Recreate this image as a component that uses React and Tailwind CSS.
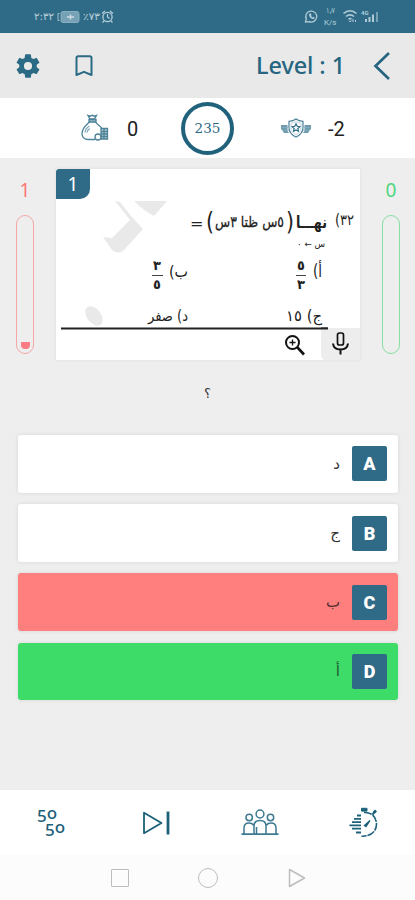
const TEAL = '#2b6a85';

const StatusLeft = () => (
  <svg width="82" height="18" viewBox="0 0 82 18" fill="none" className="opacity-75">
    <g fill="#e3f1f6" fontFamily="'DejaVu Sans', sans-serif" fontSize="10">
      <text x="0" y="12" textLength="20" lengthAdjust="spacingAndGlyphs">٢:٣٢</text>
      <text x="49" y="12" textLength="17" lengthAdjust="spacingAndGlyphs">٪٧٣</text>
    </g>
    <path d="M25.5 5.500h-1.500v7h1.500" stroke="#c9dfe8" />
    <rect x="27" y="3.500" width="18" height="11" rx="2" fill="#8fb5c5" stroke="#a5c5d2" />
    <path d="M33 9h7M36.500 6.500v5" stroke="#fff" strokeWidth="1.500" />
    <circle cx="73.500" cy="9" r="4.600" stroke="#e3f1f6" strokeWidth="1.300" />
    <path d="M73.500 6v3l2 1.500M68 5.500l3-2.500M79 5.500l-3-2.500M70 13l-1.500 1.500M77 13l1.500 1.500" stroke="#e3f1f6" strokeWidth="1.200" />
  </svg>
);

const StatusRight = () => (
  <svg width="78" height="24" viewBox="0 -2 78 24" fill="none" className="opacity-75">
    <path d="M1.500 15l.8-3A5.500 5.500 0 1 1 5 14.600z" stroke="#dcecf2" strokeWidth="1.300" />
    <path d="M5 7c0 3 2 5 5 5l.8-1.300-1.600-.9-.8.700L7 8.700l.6-.8-.8-1.600z" fill="#dcecf2" />
    <g fill="#dcecf2" fontFamily="'DejaVu Sans', sans-serif">
      <text x="22" y="6" fontSize="8" textLength="9" lengthAdjust="spacingAndGlyphs">١٫٧</text>
      <text x="20" y="18" fontFamily="Roboto, sans-serif" fontSize="8">K/s</text>
      <text x="57" y="8" fontFamily="Roboto, sans-serif" fontSize="6" fontWeight="700">4G</text>
    </g>
    <path d="M39.500 6.500c4-3.500 9-3.500 13 0M42 9.500c2.500-2 5.500-2 8 0M44.500 12.200c1-.8 2-.8 3 0" stroke="#dcecf2" strokeWidth="1.600" />
    <path d="M45 13.500l1.200 1.500 1.200-1.500M49 12v3M51.500 13v2" stroke="#dcecf2" />
    <path d="M62 15v-3M65.500 15V10M69 15V7.500" stroke="#dcecf2" strokeWidth="2" />
    <path d="M73 15V5" stroke="#8fb5c5" strokeWidth="2" />
  </svg>
);

const Gear = () => (
  <svg width="28" height="28" viewBox="0 0 24 24" fill={TEAL}>
    <path d="M19.430 12.980c.04-.32.07-.64.07-.98s-.03-.66-.07-.98l2.110-1.650c.19-.15.24-.42.12-.64l-2-3.460c-.12-.22-.39-.3-.61-.22l-2.490 1c-.52-.4-1.080-.73-1.690-.98l-.38-2.650A.488.488 0 0 0 14 2h-4c-.25 0-.46.18-.49.42l-.38 2.650c-.61.25-1.170.59-1.690.98l-2.490-1c-.23-.09-.49 0-.61.22l-2 3.460c-.13.22-.07.49.12.64l2.110 1.650c-.04.32-.07.65-.07.98s.03.66.07.98l-2.110 1.650c-.19.15-.24.42-.12.64l2 3.460c.12.22.39.3.61.22l2.490-1c.52.4 1.080.73 1.690.98l.38 2.650c.03.24.24.42.49.42h4c.25 0 .46-.18.49-.42l.38-2.650c.61-.25 1.170-.59 1.690-.98l2.490 1c.23.09.49 0 .61-.22l2-3.460c.12-.22.07-.49-.12-.64zM12 15.500a3.500 3.500 0 1 1 0-7 3.500 3.500 0 0 1 0 7z" />
  </svg>
);

const Bookmark = () => (
  <svg width="18" height="22" viewBox="0 0 18 22" fill="none" stroke={TEAL} strokeWidth="2">
    <path d="M1.500 20V3q0-1.800 1.800-1.800h11.400q1.800 0 1.800 1.800v17L9 16.800z" strokeLinejoin="round" />
  </svg>
);

const MoneyBag = () => (
  <svg width="28" height="28" viewBox="0 0 28 28" fill="none" stroke="#4d8298" strokeWidth="1.300">
    <path d="M7 1.500l2 3.500h4.500L15.500 1.500l-2 .7-2.200-.9-2.300.9z" />
    <path d="M8 5.500h7v2.500h-7z" fill="#9dbcc8" />
    <path d="M8.500 8C5 11.500 1 14 1 19.500 1 24 4 25.500 7.500 25.500H14M14.500 8c2 3 5 4 6.500 6.500" />
    <path d="M4 18.500c.2-3 2-5 4.500-6.500M6 18.500c.3-2 1.300-3 2.600-4" stroke="#80a7b7" />
    <path d="M20 14.500h6.500V25H20zM20 17.500h6.500M20 20h6.500M20 22.500h6.500M23 14.500V25" fill="#b9d0da" />
    <circle cx="17" cy="23" r="3" fill="#fff" />
  </svg>
);

const ShieldBadge = () => (
  <svg width="30" height="20" viewBox="0 0 30 20" fill="none" stroke="#4d8298" strokeWidth="1.200">
    <path d="M0 7h6.500v6L8 15H3l-1.500-2.500L0 11zM30 7h-6.500v6L22 15h5l1.500-2.500L30 11z" fill="#6e9bae" stroke="none" />
    <path d="M1 9.500h6M2 12h6M29 9.500h-6M28 12h-6" stroke="#8db2c1" strokeWidth=".7" />
    <path d="M15 1c2 1.700 4 2.300 7 2.300v6.200c0 4.500-2.500 7.500-7 9.500-4.500-2-7-5-7-9.500V3.300c3 0 5-.6 7-2.300z" fill="#fff" />
    <path d="M15 3.500c1.500 1 3 1.600 5 1.700v4.500c0 3-1.600 5.300-5 7-3.400-1.700-5-4-5-7V5.200c2-.1 3.500-.7 5-1.700z" stroke="#b3cbd5" strokeWidth=".8" />
    <path d="M15 5.800l1.200 2.500 2.600.3-1.900 1.900.5 2.700-2.400-1.300-2.400 1.300.5-2.700-1.900-1.900 2.600-.3z" stroke={TEAL} />
  </svg>
);

// Scanned exam question shown inside the card.
const QuestionScan = () => (
  <svg width="304" height="191" viewBox="56 169 304 191" className="block">
    <g fill="#e9e9e9">
      <path d="M115 201l5 1 11 14 12 13-19 21q-6 5-12 0l-9-13 9 1 18-18z" />
      <path d="M134 201h33l-13 15q-10-5-20-15z" />
      <ellipse cx="94" cy="316" rx="7" ry="11" transform="rotate(-38 94 316)" />
    </g>
    <g fill="#222" fontFamily="'DejaVu Sans', sans-serif" direction="rtl">
      <text x="354" y="225" fontSize="15" textLength="19" lengthAdjust="spacingAndGlyphs">٣٢)</text>
      <text x="327" y="228" fontSize="17" fontWeight="700" textLength="31" lengthAdjust="spacingAndGlyphs">نهـــا</text>
      <text x="284" y="227" fontSize="15" textLength="69" lengthAdjust="spacingAndGlyphs" stroke="#222" strokeWidth=".3">٥س ظتا ٣س</text>
      <text x="325" y="247" fontSize="9" textLength="28" lengthAdjust="spacingAndGlyphs">س ← ٠</text>
      <text x="322" y="277" fontSize="17" textLength="9" lengthAdjust="spacingAndGlyphs">أ)</text>
      <text x="305" y="270" fontSize="13" fontWeight="700">٥</text>
      <text x="305" y="289" fontSize="13" fontWeight="700">٣</text>
      <text x="188" y="277" fontSize="16" textLength="19" lengthAdjust="spacingAndGlyphs">ب)</text>
      <text x="161" y="270" fontSize="13" fontWeight="700">٣</text>
      <text x="161" y="289" fontSize="13" fontWeight="700">٥</text>
      <text x="322" y="321" fontSize="15" textLength="36" lengthAdjust="spacingAndGlyphs">ج) ١٥</text>
      <text x="188" y="321" fontSize="15" textLength="40" lengthAdjust="spacingAndGlyphs">د) صفر</text>
    </g>
    <g fill="#222" fontFamily="'DejaVu Sans', sans-serif">
      <text x="190" y="229" fontSize="16">=</text>
      <text x="206" y="230" fontSize="25" textLength="8" lengthAdjust="spacingAndGlyphs">(</text>
      <text x="286" y="230" fontSize="25" textLength="8" lengthAdjust="spacingAndGlyphs">)</text>
    </g>
    <path d="M296 275.500h10M152 275.500h11" stroke="#444" />
    <path d="M61 328.500h267" stroke="#222" strokeWidth="2" />
    <path d="M321 328h39v32h-34q-5 0-5-5z" fill="#ededed" />
    <path d="M321 328.500h7" stroke="#222" strokeWidth="2" />
    <g fill="none" stroke="#111" strokeWidth="2">
      <circle cx="292.500" cy="342.500" r="6.500" />
      <path d="M297 347l7 7.500" strokeWidth="2.600" />
      <path d="M289.500 342.500h6M292.500 339.500v6" strokeWidth="1.300" />
      <rect x="337.500" y="333" width="6" height="12" rx="2" strokeWidth="1.700" />
      <path d="M333 343.500c.5 4.500 3 6 7.500 6s7-1.500 7.500-6M340.500 349.500v5" />
    </g>
  </svg>
);

const FiftyFifty = () => (
  <div className="flex h-[30px] w-[30px] flex-col font-['Noto_Sans'] text-[17px] leading-[14px] font-medium text-[#1c6079]">
    <div className="flex">
      <span className="pt-[1px]">5</span>
      <span className="-mt-[2px]">o</span>
    </div>
    <div className="flex pl-[8px]">
      <span>5</span>
      <span className="-mt-[3px]">o</span>
    </div>
  </div>
);

const SkipNext = () => (
  <svg width="28" height="24" viewBox="0 0 28 24" fill="none" stroke="#1c6079" strokeWidth="1.800">
    <path d="M2 1.800v20.400L19.500 12z" strokeLinejoin="round" />
    <path d="M26 .5v23" strokeWidth="2.800" />
  </svg>
);

const Audience = () => (
  <svg width="38" height="27" viewBox="0 0 38 27" fill="none" stroke="#3d7a91" strokeWidth="1.500">
    <circle cx="19" cy="5" r="3.900" />
    <circle cx="8.200" cy="8.500" r="3.200" />
    <circle cx="29.500" cy="8.500" r="3.200" />
    <path d="M13 25v-8c0-3.500 2.500-5.500 6-5.500s6 2 6 5.500v8M3 25v-6c0-3.500 2-5 5-5 2 0 3.500.6 4.400 2M35 25v-6c0-3.500-2-5-5-5-2 0-3.500.6-4.400 2M15.500 18v7" />
    <path d="M.5 25.200h37" strokeWidth="1.800" />
  </svg>
);

const Stopwatch = () => (
  <svg width="30" height="31" viewBox="0 0 30 31" fill="none" stroke="#1c6079">
    <path d="M15 5.500C23 5 27.500 10.500 27.500 17c0 7-5 12.500-15 12.200" strokeWidth="1.600" strokeDasharray="8 1" />
    <path d="M12.500 1.300h5.500v2.800h-5.500z" fill="#1c6079" />
    <path d="M23.500 7.500l2.500-3" strokeWidth="2" />
    <path d="M25 3.500l2 2" strokeWidth="2.800" />
    <path d="M8 8.500h4M5 11.800h7M3 15.100h9M.5 18.400h11.500M3 21.700h9M7 25.500h5" strokeWidth="1.800" />
    <path d="M15.500 18.500l5.500-5-4 6z" fill="#1c6079" strokeWidth="1.300" />
  </svg>
);

const Tube = ({ value, tone, tube, children }) => (
  <div className={`flex flex-col items-center gap-[12px] pt-[8px] ${tone}`}>
    <span className="h-[26px] font-['Noto_Sans'] text-[19px] leading-[26px]">{value}</span>
    <div className={`flex h-[139px] w-[18px] items-end justify-center rounded-full border-[1.5px] pb-[4px] ${tube}`}>
      {children}
    </div>
  </div>
);

const OPTIONS = [
  { key: 'A', label: 'د', tone: 'bg-white text-[#333]' },
  { key: 'B', label: 'ج', tone: 'bg-white text-[#333]' },
  { key: 'C', label: 'ب', tone: 'bg-[#ff7f7f] text-[#553030]' },
  { key: 'D', label: 'أ', tone: 'bg-[#3ddc69] text-[#1d5a30]' },
];

export default function App() {
  return (
    <div className="flex h-[900px] w-[415px] flex-col overflow-hidden bg-[#eeeeee] font-[Roboto,sans-serif]">
      <div className="flex h-[33px] shrink-0 items-center justify-between bg-[#2f6b86] pr-[33px] pl-[34px]">
        <StatusLeft />
        <StatusRight />
      </div>

      <header className="flex h-[65px] shrink-0 items-center bg-[#e9e9e9] pr-[24px] pl-[14px]">
        <Gear />
        <div className="ml-[33px]"><Bookmark /></div>
        <h1 className="ml-auto font-['Noto_Sans'] text-[23.500px] tracking-[-0.1px] font-medium text-[#26657f]">Level : 1</h1>
        <svg width="18" height="28" viewBox="0 0 18 28" fill="none" stroke="#26657f" strokeWidth="2.700" className="ml-[28px]">
          <path d="M16 1L2.500 14 16 27" />
        </svg>
      </header>

      <section className="flex h-[60px] shrink-0 items-center bg-white pl-[81px]">
        <MoneyBag />
        <span className="ml-[18px] w-[14px] pt-[2px] text-[20px] text-[#222]">0</span>
        <div className="ml-[40px] flex size-[53px] items-center justify-center rounded-full border-4 border-[#20617b] font-['DejaVu_Serif'] text-[13.500px] text-[#2b6a85]">
          235
        </div>
        <div className="ml-[47px]"><ShieldBadge /></div>
        <span className="ml-[17px] pt-[2px] text-[20px] text-[#222]">-2</span>
      </section>

      <section className="mt-[11px] flex h-[191px] shrink-0 justify-between pr-[15px] pl-[16px]">
        <Tube value="1" tone="text-[#fb7777]" tube="border-[#f6a6a6]">
          <div className="h-[7px] w-[9px] rounded-b-[4px] bg-[#fb7c84]" />
        </Tube>
        <div className="relative mr-[21px] ml-[21px] w-[304px] bg-white shadow-[0_0_3px_rgba(0,0,0,0.08)]">
          <QuestionScan />
          <span className="absolute top-0 left-0 flex h-[30px] w-[34px] items-center justify-center rounded-tl-[3px] rounded-br-[10px] bg-[#2f6b86] font-['Noto_Sans'] text-[19px] text-white">
            1
          </span>
        </div>
        <Tube value="0" tone="text-[#4fd67d]" tube="border-[#86dfa3]" />
      </section>

      <p className="mt-[21px] h-[26px] shrink-0 text-center font-['DejaVu_Sans'] text-[13px] leading-[26px] text-[#333]">؟</p>

      <ul className="mt-[28px] flex flex-col gap-[11.500px] pr-[17px] pl-[18px]">
        {OPTIONS.map((o) => (
          <li key={o.key} className={`flex h-[57.700px] items-center justify-end gap-[12px] rounded-[3px] pr-[11px] shadow-[0_0_4px_rgba(0,0,0,0.1)] ${o.tone}`}>
            <span className="font-['DejaVu_Sans'] text-[15px]">{o.label}</span>
            <span className="flex size-[35px] items-center justify-center rounded-[2px] bg-[#2f6b86] text-[18px] font-black text-white">{o.key}</span>
          </li>
        ))}
      </ul>

      <nav className="mt-auto flex h-[65px] shrink-0 items-center bg-white pl-[37px]">
        <FiftyFifty />
        <div className="ml-[75px]"><SkipNext /></div>
        <div className="ml-[71px]"><Audience /></div>
        <div className="ml-[70px]"><Stopwatch /></div>
      </nav>
      <div className="flex h-[45px] shrink-0 items-center bg-[#fcfcfc] pl-[111px]">
        <div className="size-[18px] rounded-[1px] border-[1.500px] border-[#bdbdbd]" />
        <div className="ml-[69px] size-[20px] rounded-full border-[1.500px] border-[#bdbdbd]" />
        <svg width="18" height="20" viewBox="0 0 18 20" fill="none" stroke="#bdbdbd" strokeWidth="1.500" className="ml-[70px]">
          <path d="M1.500 1.500v17L16.500 10z" strokeLinejoin="round" />
        </svg>
      </div>
    </div>
  );
}
